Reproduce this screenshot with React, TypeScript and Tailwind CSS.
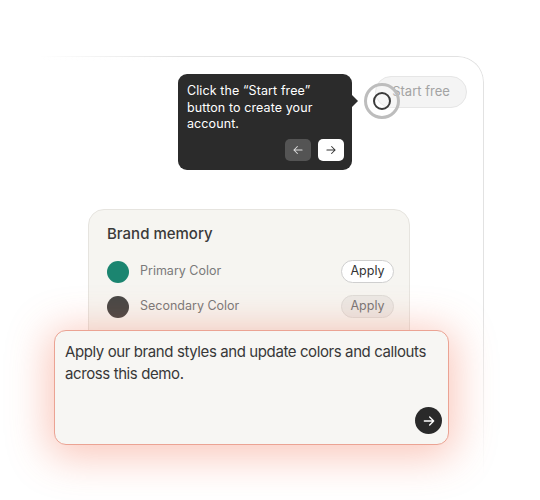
import React from "react";

function ArrowLeft() {
  return (
    <svg width="14" height="14" viewBox="0 0 24 24" fill="none" stroke="currentColor" strokeWidth="1.8" strokeLinecap="round" strokeLinejoin="round">
      <path d="M19 12H5M11 6l-6 6 6 6" />
    </svg>
  );
}

function ArrowRight({ size = 14, w = 1.8 }: { size?: number; w?: number }) {
  return (
    <svg width={size} height={size} viewBox="0 0 24 24" fill="none" stroke="currentColor" strokeWidth={w} strokeLinecap="round" strokeLinejoin="round">
      <path d="M5 12h14M13 6l6 6-6 6" />
    </svg>
  );
}

export default function App() {
  return (
    <div
      className="relative w-[540px] h-[500px] overflow-hidden bg-white text-[#333]"
      style={{ fontFamily: "Inter, 'Noto Sans', sans-serif" }}
    >
      {/* background window */}
      <div className="absolute left-[40px] top-[56px] w-[444px] h-[420px] rounded-tr-[26px] border-t border-r border-[#e2e2e2] [mask-image:linear-gradient(to_bottom,black_60%,transparent_100%)]">
        <div className="absolute left-0 -top-[2px] h-[6px] w-[140px] bg-gradient-to-r from-white to-white/0" />
      </div>

      {/* start free button */}
      <div className="absolute left-[375px] top-[76px] w-[92px] h-[32px] rounded-full bg-[#f4f4f4] border border-[#e6e6e6] flex items-center justify-center text-[13px] text-[#a3a3a3]">
        Start free
      </div>

      {/* cursor ring */}
      <div className="absolute left-[364px] top-[83px] w-[36px] h-[36px] rounded-full border-[3px] border-[#bdbdbd] bg-white/20 flex items-center justify-center">
        <div className="w-[18px] h-[18px] rounded-full border-2 border-[#3a3a3a]" />
      </div>

      {/* tooltip */}
      <div className="absolute left-[178px] top-[74px] w-[174px] h-[96px] rounded-[9px] bg-[#2b2b2b] px-[9px] pt-[9px] text-white">
        <p className="text-[12.5px] leading-[16.5px] tracking-[0.1px]">
          Click the “Start free” button to create your account.
        </p>
        <div className="absolute right-[8px] bottom-[9px] flex gap-[7px]">
          <div className="w-[26px] h-[22px] rounded-[5px] bg-[#545454] flex items-center justify-center text-[#ddd]">
            <ArrowLeft />
          </div>
          <div className="w-[26px] h-[22px] rounded-[5px] bg-white flex items-center justify-center text-[#333]">
            <ArrowRight />
          </div>
        </div>
        <div className="absolute right-[-6px] top-[20px] w-0 h-0 border-y-[7px] border-y-transparent border-l-[7px] border-l-[#2b2b2b]" />
      </div>

      {/* brand memory card */}
      <div className="absolute left-[88px] top-[209px] w-[322px] h-[150px] rounded-[16px] bg-[#f6f5f1] border border-[#e6e4df] px-[18px] pt-[13px]">
        <div className="text-[15px] font-medium text-[#3a3a3a]">Brand memory</div>
        <div className="mt-[14px] flex items-center h-[24px]">
          <div className="w-[22px] h-[22px] rounded-full bg-[#1b8570]" />
          <span className="ml-[11px] text-[12.5px] text-[#7a7a7a]">Primary Color</span>
          <div className="ml-auto mr-[-3px] h-[23px] w-[53px] rounded-full bg-white border border-[#cfcfcf] flex items-center justify-center text-[12.5px] text-[#333]">
            Apply
          </div>
        </div>
        <div className="mt-[11px] flex items-center h-[24px]">
          <div className="w-[22px] h-[22px] rounded-full bg-[#484846]" />
          <span className="ml-[11px] text-[12.5px] text-[#7a7a7a]">Secondary Color</span>
          <div className="ml-auto mr-[-3px] h-[23px] w-[53px] rounded-full bg-[#ebe9e5] border border-[#dedcd8] flex items-center justify-center text-[12.5px] text-[#777]">
            Apply
          </div>
        </div>
      </div>

      {/* prompt box */}
      <div className="absolute left-[54px] top-[330px] w-[395px] h-[115px] rounded-[12px] bg-[#f7f6f3] border border-[#eba393] shadow-[0_6px_40px_6px_rgba(240,95,60,0.35)] px-[10px] pt-[10px]">
        <p className="text-[15px] leading-[22px] tracking-[-0.4px] text-[#383838]">
          Apply our brand styles and update colors and callouts across this demo.
        </p>
        <div className="absolute right-[6px] bottom-[10px] w-[27px] h-[27px] rounded-full bg-[#2a2a2a] flex items-center justify-center text-white">
          <ArrowRight size={16} w={2} />
        </div>
      </div>
    </div>
  );
}
